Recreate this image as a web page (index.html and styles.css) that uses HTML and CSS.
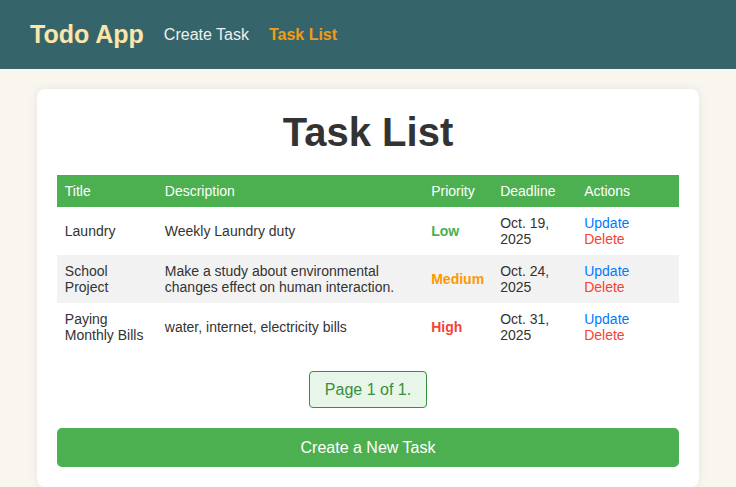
FILE: index.html
```html
<!DOCTYPE html>
<html lang="en">
<head>
<meta charset="utf-8">
<title>Task List</title>
<link rel="stylesheet" href="styles.css">
</head>
<body>
<header class="topbar">
  <span class="brand">Todo App</span>
  <a class="nav-link" href="#">Create Task</a>
  <a class="nav-link active" href="#">Task List</a>
</header>
<main class="page">
  <section class="card">
    <h1 class="title">Task List</h1>
    <table class="tasks">
      <colgroup>
        <col class="c-title"><col class="c-desc"><col class="c-prio"><col class="c-dead"><col class="c-act">
      </colgroup>
      <thead>
        <tr><th>Title</th><th>Description</th><th>Priority</th><th>Deadline</th><th>Actions</th></tr>
      </thead>
      <tbody>
        <tr>
          <td>Laundry</td>
          <td>Weekly Laundry duty</td>
          <td class="prio low">Low</td>
          <td>Oct. 19,<br>2025</td>
          <td><a class="act update" href="#">Update</a><br><a class="act delete" href="#">Delete</a></td>
        </tr>
        <tr>
          <td>School<br>Project</td>
          <td>Make a study about environmental<br>changes effect on human interaction.</td>
          <td class="prio medium">Medium</td>
          <td>Oct. 24,<br>2025</td>
          <td><a class="act update" href="#">Update</a><br><a class="act delete" href="#">Delete</a></td>
        </tr>
        <tr>
          <td>Paying<br>Monthly Bills</td>
          <td>water, internet, electricity bills</td>
          <td class="prio high">High</td>
          <td>Oct. 31,<br>2025</td>
          <td><a class="act update" href="#">Update</a><br><a class="act delete" href="#">Delete</a></td>
        </tr>
      </tbody>
    </table>
    <div class="pager"><span class="pager-box">Page 1 of 1.</span></div>
    <a class="btn-new" href="#">Create a New Task</a>
  </section>
</main>
</body>
</html>
```
FILE: styles.css
```css
* { box-sizing: border-box; }
html, body { margin: 0; padding: 0; }
body {
  font-family: "Liberation Sans", Arial, sans-serif;
  background: #f9f6f0;
  color: #333;
}
.topbar {
  height: 69px;
  background: #35656b;
  display: flex;
  align-items: center;
  gap: 20px;
  padding: 0 30px;
}
.brand {
  font-size: 25px;
  font-weight: bold;
  color: #fbe5a8;
}
.nav-link {
  font-size: 16px;
  color: #eef0ee;
  text-decoration: none;
}
.nav-link.active {
  color: #f39c12;
  font-weight: bold;
}
.page {
  padding-top: 20px;
  display: flex;
  justify-content: center;
}
.card {
  width: 90%;
  background: #fff;
  border-radius: 8px;
  padding: 20px;
  box-shadow: 0 0 10px rgba(0,0,0,0.08);
}
.title {
  margin: 0 0 20px;
  text-align: center;
  font-size: 40px;
  line-height: 46px;
  color: #333;
}
.tasks {
  width: 100%;
  border-collapse: collapse;
  font-size: 14px;
  line-height: 16px;
}
.c-title { width: 100px; }
.c-prio { width: 69px; }
.c-dead { width: 84px; }
.c-act { width: 103px; }
.tasks th {
  background: #4caf50;
  color: #fff;
  font-weight: normal;
  text-align: left;
  padding: 8px;
}
.tasks td {
  padding: 8px;
  vertical-align: middle;
  text-align: left;
}
.tasks tbody tr:nth-child(even) { background: #f2f2f2; }
.prio { font-weight: bold; }
.low { color: #4caf50; }
.medium { color: #ff9800; }
.high { color: #f44336; }
.act { text-decoration: none; }
.update { color: #007bff; }
.delete { color: #f44336; }
.pager {
  display: flex;
  justify-content: center;
  margin-top: 20px;
}
.pager-box {
  display: inline-block;
  padding: 8px 15px;
  font-size: 16px;
  line-height: 19px;
  color: #388e3c;
  background: #e8f5e9;
  border: 1px solid #388e3c;
  border-radius: 4px;
}
.btn-new {
  display: block;
  margin-top: 20px;
  background: #4caf50;
  color: #fff;
  text-align: center;
  text-decoration: none;
  font-size: 16px;
  line-height: 19px;
  padding: 10px;
  border-radius: 5px;
}
```
